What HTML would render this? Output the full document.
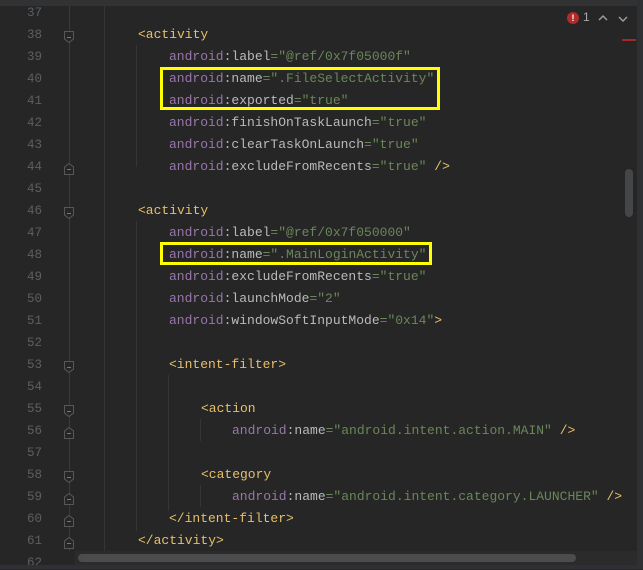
<!DOCTYPE html>
<html><head><meta charset="utf-8"><style>
*{margin:0;padding:0;box-sizing:border-box}
body{width:643px;height:569px;background:#262626;overflow:hidden;position:relative;font-family:"Liberation Mono",monospace;font-size:13px}
.top{position:absolute;left:0;top:0;width:643px;height:6px;background:#303234}
.ln{position:absolute;left:0;width:42px;text-align:right;color:#5c5f62;font-size:12.5px}
.code{position:absolute;white-space:pre;color:#bababa}
.t{color:#e8bf6a}.n{color:#9876aa}.v{color:#6a8759}.a{color:#bababa}
.vl{position:absolute;width:1px;background:#353535}
.fold{position:absolute;left:63px}
.box{position:absolute;border:3px solid #ffff00}
</style></head><body>
<div class="top"></div>
<div class="vl" style="left:69px;top:6px;height:545px;background:#3a3a3a"></div>
<div class="vl" style="left:104px;top:6px;height:545px"></div>
<div class="vl" style="left:136px;top:45px;height:122px"></div>
<div class="vl" style="left:136px;top:221px;height:310px"></div>
<div class="vl" style="left:168px;top:375px;height:136px"></div>
<div class="vl" style="left:200px;top:419px;height:22px"></div>
<div class="vl" style="left:200px;top:485px;height:22px"></div>

<div id="g"></div>
<div class="box" style="left:160px;top:67px;width:280px;height:43px"></div>
<div class="box" style="left:160px;top:242px;width:272px;height:23px"></div>

<div style="position:absolute;left:567px;top:12px;width:12px;height:12px;border-radius:50%;background:#b22a2a;color:#fff;font:bold 9px 'Liberation Sans',sans-serif;text-align:center;line-height:12px">!</div>
<div style="position:absolute;left:583px;top:10px;color:#a9a9a9;font:12px 'Liberation Sans',sans-serif">1</div>
<svg style="position:absolute;left:596px;top:12px" width="40" height="12"><path d="M3 8 L7 4 L11 8" stroke="#a0a0a0" fill="none" stroke-width="1.4"/><path d="M23 5 L27 9 L31 5" stroke="#a0a0a0" fill="none" stroke-width="1.4"/></svg>
<div style="position:absolute;left:622px;top:39px;width:14px;height:2px;background:#a32929"></div>
<div style="position:absolute;left:625px;top:169px;width:8px;height:48px;border-radius:4px;background:#444648"></div>
<div style="position:absolute;left:637px;top:0;width:6px;height:569px;background:#2e3033"></div>
<div style="position:absolute;left:0;top:565px;width:643px;height:4px;background:#2e3033"></div>
<div style="position:absolute;left:75px;top:551px;width:562px;height:14px;background:#2b2b2b"></div>
<div style="position:absolute;left:78px;top:554px;width:498px;height:8px;border-radius:4px;background:#4a4c4e"></div>

<script>
var L=[
[37,0,''],
[38,1,'<span class="t">&lt;activity</span>'],
[39,2,'<span class="n">android</span>:label<span class="v">="@ref/0x7f05000f"</span>'],
[40,2,'<span class="n">android</span>:name<span class="v">=".FileSelectActivity"</span>'],
[41,2,'<span class="n">android</span>:exported<span class="v">="true"</span>'],
[42,2,'<span class="n">android</span>:finishOnTaskLaunch<span class="v">="true"</span>'],
[43,2,'<span class="n">android</span>:clearTaskOnLaunch<span class="v">="true"</span>'],
[44,2,'<span class="n">android</span>:excludeFromRecents<span class="v">="true"</span> <span class="t">/&gt;</span>'],
[45,0,''],
[46,1,'<span class="t">&lt;activity</span>'],
[47,2,'<span class="n">android</span>:label<span class="v">="@ref/0x7f050000"</span>'],
[48,2,'<span class="n">android</span>:name<span class="v">=".MainLoginActivity"</span>'],
[49,2,'<span class="n">android</span>:excludeFromRecents<span class="v">="true"</span>'],
[50,2,'<span class="n">android</span>:launchMode<span class="v">="2"</span>'],
[51,2,'<span class="n">android</span>:windowSoftInputMode<span class="v">="0x14"</span><span class="t">&gt;</span>'],
[52,0,''],
[53,2,'<span class="t">&lt;intent-filter&gt;</span>'],
[54,0,''],
[55,3,'<span class="t">&lt;action</span>'],
[56,4,'<span class="n">android</span>:name<span class="v">="android.intent.action.MAIN"</span> <span class="t">/&gt;</span>'],
[57,0,''],
[58,3,'<span class="t">&lt;category</span>'],
[59,4,'<span class="n">android</span>:name<span class="v">="android.intent.category.LAUNCHER"</span> <span class="t">/&gt;</span>'],
[60,2,'<span class="t">&lt;/intent-filter&gt;</span>'],
[61,1,'<span class="t">&lt;/activity&gt;</span>'],
[62,0,'']];
var opens=[38,46,53,55,58];
var folds=[38,44,46,53,55,56,58,59,60,61];
var h='';var X=[0,138,169,201,232];
L.forEach(function(r){var y=5+(r[0]-37)*22;
h+='<div class="ln" style="top:'+(y+1)+'px">'+r[0]+'</div>';
if(r[2])h+='<div class="code" style="left:'+X[r[1]]+'px;top:'+y+'px">'+r[2]+'</div>';
if(folds.indexOf(r[0])>=0){
 var d=opens.indexOf(r[0])>=0?'M1.5 1.5H10.5V9L6 12.5L1.5 9Z':'M1.5 12.5H10.5V5L6 1.5L1.5 5Z';
 h+='<svg class="fold" style="top:'+(y+3)+'px" width="12" height="14"><path d="'+d+'" fill="#262626" stroke="#55585b"/><path d="M4 7.5H8" stroke="#75787b"/></svg>';}
});
document.getElementById('g').innerHTML=h;
</script>
</body></html>
